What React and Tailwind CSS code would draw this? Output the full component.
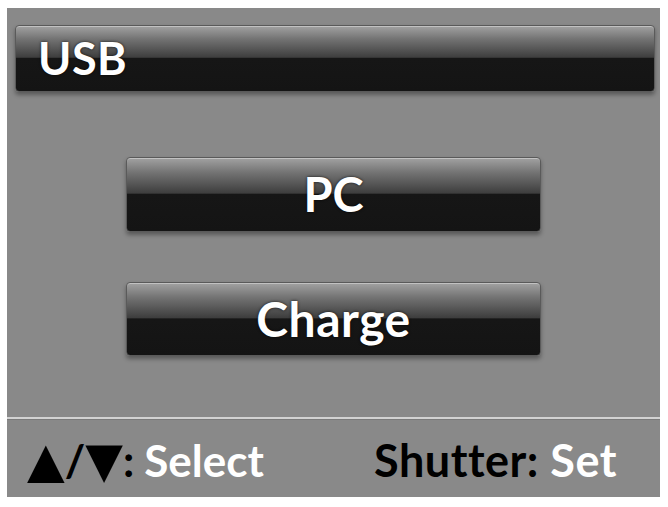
export default function App() {
  const bar =
    "bg-[linear-gradient(to_bottom,#a2a2a2_0%,#737373_20%,#3e3e3e_48%,#161616_50%,#141414_100%)] shadow-[0_3px_4px_rgba(0,0,0,0.35),inset_0_1px_0_rgba(255,255,255,0.35)] border border-[#5a5a5a] rounded-[4px]";
  const label =
    "text-white font-bold [text-shadow:0_0_3px_rgba(0,0,0,0.8)]";
  const tri = { fontFamily: "'DejaVu Sans', sans-serif" };

  return (
    <div
      className="w-[668px] h-[507px] bg-white pt-[8px] pl-[7px]"
      style={{ fontFamily: "Lato, 'Open Sans', sans-serif" }}
    >
      <div className="w-[653px] h-[489px] bg-[#898989] flex flex-col">
        <div className="flex-1 flex flex-col">
          <div className={`mt-[17px] ml-[8px] w-[640px] h-[67px] flex items-center pl-[22px] ${bar}`}>
            <span className={`${label} text-[45px] leading-none tracking-[0.5px]`}>USB</span>
          </div>
          <div className="flex flex-col items-center gap-[50px] mt-[65px]">
            <div className={`w-[415px] h-[75px] flex items-center justify-center ${bar}`}>
              <span className={`${label} text-[47px] leading-none`}>PC</span>
            </div>
            <div className={`w-[415px] h-[74px] flex items-center justify-center ${bar}`}>
              <span className={`${label} text-[48px] leading-none tracking-[0.5px]`}>Charge</span>
            </div>
          </div>
        </div>
        <div className="h-[3px] bg-[#d2d2d2] border-b border-[#7a7a7a]" />
        <div className="h-[77px] flex items-baseline pl-[20px] pr-[43px] justify-between pt-[16px]">
          <span className="text-[44px] font-bold leading-none flex items-baseline text-black">
            <span className="text-[49px]" style={tri}>▲</span>
            <span className="text-[44px]">/</span>
            <span className="text-[49px]" style={tri}>▼</span>
            <span>:</span>
            <span className="text-white ml-[10px]">Select</span>
          </span>
          <span className="text-[45px] font-bold leading-none tracking-[0.5px]">
            <span className="text-black">Shutter:</span>
            <span className="text-white"> Set</span>
          </span>
        </div>
      </div>
    </div>
  );
}
